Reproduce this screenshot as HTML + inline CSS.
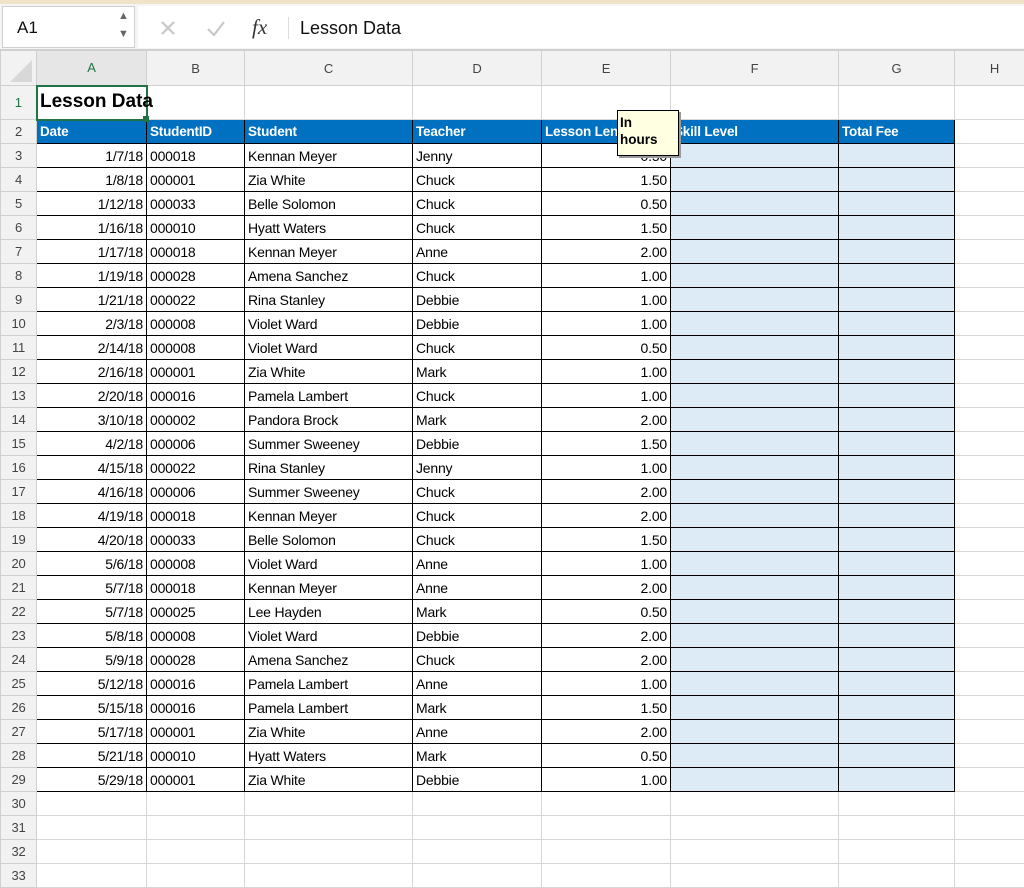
<!DOCTYPE html>
<html><head><meta charset="utf-8"><style>
*{margin:0;padding:0;box-sizing:border-box}
body{width:1024px;height:886px;overflow:hidden;background:#fff;font-family:"Liberation Sans",sans-serif;position:relative}
.top{position:absolute;left:0;top:0;width:1024px;height:4px;background:#efe3c8}
.fb{position:absolute;left:0;top:4px;width:1024px;height:46px;background:#f5f5f5;border-bottom:1px solid #cfcfcf}
.nb{position:absolute;left:2px;top:2px;width:133px;height:42px;background:#fff;border:1px solid #d0d0d0}
.fx{position:absolute;left:138px;top:2px;width:886px;height:42px;background:#fff}
table{position:absolute;left:0;top:50px;width:1034px;border-collapse:collapse;table-layout:fixed;font-size:14px;letter-spacing:-0.2px}
td{border:1px solid #d6d6d6;height:24px;padding:0 3px;white-space:nowrap;overflow:hidden;color:#000}
tr.ch td{height:35px;background:#f2f2f2;text-align:center;color:#444;font-size:13px;border-color:#d0d0d0}
td.rh{background:#f2f2f2;color:#444;text-align:center;font-size:13px;padding:0;border-color:#d0d0d0}
.d{border:1px solid #000}
.h{background:#0070c0;color:#fff;font-weight:bold;border:1px solid #000;font-size:13.5px}
.f{background:#ddebf7;border:1px solid #000}
.r{text-align:right}
</style></head><body>
<div class="top"></div>
<div class="fb">
<div class="nb"><span style="position:absolute;left:14px;top:11px;font-size:17px;color:#111">A1</span>
<span style="position:absolute;left:115px;top:3px;font-size:11px;color:#666">▲</span>
<span style="position:absolute;left:115px;top:21px;font-size:11px;color:#666">▼</span></div>
<div class="fx">
<svg style="position:absolute;left:20px;top:12px" width="120" height="22"><path d="M4 4 L16 16 M16 4 L4 16" stroke="#c8c8c8" stroke-width="2.2"/><path d="M50 11 L56 17 L66 4" stroke="#c8c8c8" stroke-width="2.2" fill="none"/></svg>
<span style="position:absolute;left:114px;top:9px;font-family:'Liberation Serif',serif;font-style:italic;font-size:21px;color:#333">fx</span>
<div style="position:absolute;left:150px;top:11px;width:1px;height:22px;background:#ddd"></div>
<span style="position:absolute;left:162px;top:12px;font-size:18px;color:#111">Lesson Data</span>
</div></div>
<table>
<colgroup><col style="width:36px"><col style="width:110px"><col style="width:98px"><col style="width:168px"><col style="width:129px"><col style="width:129px"><col style="width:168px"><col style="width:116px"><col style="width:80px"></colgroup>
<tr class="ch"><td style="background:#f2f2f2"><svg width="30" height="30" style="display:block;margin-top:2px"><path d="M28 6 L28 28 L6 28 Z" fill="#d8d8d8"/></svg></td><td style="color:#217346;background:#e6e6e6">A</td><td>B</td><td>C</td><td>D</td><td>E</td><td>F</td><td>G</td><td>H</td></tr>
<tr><td class="rh" style="height:34px;color:#217346">1</td><td style="border:2px solid #217346"></td><td></td><td></td><td></td><td></td><td></td><td></td><td></td></tr>
<tr><td class="rh">2</td><td class="h">Date</td><td class="h">StudentID</td><td class="h">Student</td><td class="h">Teacher</td><td class="h">Lesson Length</td><td class="h">Skill Level</td><td class="h">Total Fee</td><td></td></tr>
<tr><td class="rh">3</td><td class="d r">1/7/18</td><td class="d">000018</td><td class="d">Kennan Meyer</td><td class="d">Jenny</td><td class="d r">0.50</td><td class="f"></td><td class="f"></td><td></td></tr>
<tr><td class="rh">4</td><td class="d r">1/8/18</td><td class="d">000001</td><td class="d">Zia White</td><td class="d">Chuck</td><td class="d r">1.50</td><td class="f"></td><td class="f"></td><td></td></tr>
<tr><td class="rh">5</td><td class="d r">1/12/18</td><td class="d">000033</td><td class="d">Belle Solomon</td><td class="d">Chuck</td><td class="d r">0.50</td><td class="f"></td><td class="f"></td><td></td></tr>
<tr><td class="rh">6</td><td class="d r">1/16/18</td><td class="d">000010</td><td class="d">Hyatt Waters</td><td class="d">Chuck</td><td class="d r">1.50</td><td class="f"></td><td class="f"></td><td></td></tr>
<tr><td class="rh">7</td><td class="d r">1/17/18</td><td class="d">000018</td><td class="d">Kennan Meyer</td><td class="d">Anne</td><td class="d r">2.00</td><td class="f"></td><td class="f"></td><td></td></tr>
<tr><td class="rh">8</td><td class="d r">1/19/18</td><td class="d">000028</td><td class="d">Amena Sanchez</td><td class="d">Chuck</td><td class="d r">1.00</td><td class="f"></td><td class="f"></td><td></td></tr>
<tr><td class="rh">9</td><td class="d r">1/21/18</td><td class="d">000022</td><td class="d">Rina Stanley</td><td class="d">Debbie</td><td class="d r">1.00</td><td class="f"></td><td class="f"></td><td></td></tr>
<tr><td class="rh">10</td><td class="d r">2/3/18</td><td class="d">000008</td><td class="d">Violet Ward</td><td class="d">Debbie</td><td class="d r">1.00</td><td class="f"></td><td class="f"></td><td></td></tr>
<tr><td class="rh">11</td><td class="d r">2/14/18</td><td class="d">000008</td><td class="d">Violet Ward</td><td class="d">Chuck</td><td class="d r">0.50</td><td class="f"></td><td class="f"></td><td></td></tr>
<tr><td class="rh">12</td><td class="d r">2/16/18</td><td class="d">000001</td><td class="d">Zia White</td><td class="d">Mark</td><td class="d r">1.00</td><td class="f"></td><td class="f"></td><td></td></tr>
<tr><td class="rh">13</td><td class="d r">2/20/18</td><td class="d">000016</td><td class="d">Pamela Lambert</td><td class="d">Chuck</td><td class="d r">1.00</td><td class="f"></td><td class="f"></td><td></td></tr>
<tr><td class="rh">14</td><td class="d r">3/10/18</td><td class="d">000002</td><td class="d">Pandora Brock</td><td class="d">Mark</td><td class="d r">2.00</td><td class="f"></td><td class="f"></td><td></td></tr>
<tr><td class="rh">15</td><td class="d r">4/2/18</td><td class="d">000006</td><td class="d">Summer Sweeney</td><td class="d">Debbie</td><td class="d r">1.50</td><td class="f"></td><td class="f"></td><td></td></tr>
<tr><td class="rh">16</td><td class="d r">4/15/18</td><td class="d">000022</td><td class="d">Rina Stanley</td><td class="d">Jenny</td><td class="d r">1.00</td><td class="f"></td><td class="f"></td><td></td></tr>
<tr><td class="rh">17</td><td class="d r">4/16/18</td><td class="d">000006</td><td class="d">Summer Sweeney</td><td class="d">Chuck</td><td class="d r">2.00</td><td class="f"></td><td class="f"></td><td></td></tr>
<tr><td class="rh">18</td><td class="d r">4/19/18</td><td class="d">000018</td><td class="d">Kennan Meyer</td><td class="d">Chuck</td><td class="d r">2.00</td><td class="f"></td><td class="f"></td><td></td></tr>
<tr><td class="rh">19</td><td class="d r">4/20/18</td><td class="d">000033</td><td class="d">Belle Solomon</td><td class="d">Chuck</td><td class="d r">1.50</td><td class="f"></td><td class="f"></td><td></td></tr>
<tr><td class="rh">20</td><td class="d r">5/6/18</td><td class="d">000008</td><td class="d">Violet Ward</td><td class="d">Anne</td><td class="d r">1.00</td><td class="f"></td><td class="f"></td><td></td></tr>
<tr><td class="rh">21</td><td class="d r">5/7/18</td><td class="d">000018</td><td class="d">Kennan Meyer</td><td class="d">Anne</td><td class="d r">2.00</td><td class="f"></td><td class="f"></td><td></td></tr>
<tr><td class="rh">22</td><td class="d r">5/7/18</td><td class="d">000025</td><td class="d">Lee Hayden</td><td class="d">Mark</td><td class="d r">0.50</td><td class="f"></td><td class="f"></td><td></td></tr>
<tr><td class="rh">23</td><td class="d r">5/8/18</td><td class="d">000008</td><td class="d">Violet Ward</td><td class="d">Debbie</td><td class="d r">2.00</td><td class="f"></td><td class="f"></td><td></td></tr>
<tr><td class="rh">24</td><td class="d r">5/9/18</td><td class="d">000028</td><td class="d">Amena Sanchez</td><td class="d">Chuck</td><td class="d r">2.00</td><td class="f"></td><td class="f"></td><td></td></tr>
<tr><td class="rh">25</td><td class="d r">5/12/18</td><td class="d">000016</td><td class="d">Pamela Lambert</td><td class="d">Anne</td><td class="d r">1.00</td><td class="f"></td><td class="f"></td><td></td></tr>
<tr><td class="rh">26</td><td class="d r">5/15/18</td><td class="d">000016</td><td class="d">Pamela Lambert</td><td class="d">Mark</td><td class="d r">1.50</td><td class="f"></td><td class="f"></td><td></td></tr>
<tr><td class="rh">27</td><td class="d r">5/17/18</td><td class="d">000001</td><td class="d">Zia White</td><td class="d">Anne</td><td class="d r">2.00</td><td class="f"></td><td class="f"></td><td></td></tr>
<tr><td class="rh">28</td><td class="d r">5/21/18</td><td class="d">000010</td><td class="d">Hyatt Waters</td><td class="d">Mark</td><td class="d r">0.50</td><td class="f"></td><td class="f"></td><td></td></tr>
<tr><td class="rh">29</td><td class="d r">5/29/18</td><td class="d">000001</td><td class="d">Zia White</td><td class="d">Debbie</td><td class="d r">1.00</td><td class="f"></td><td class="f"></td><td></td></tr>
<tr><td class="rh">30</td><td></td><td></td><td></td><td></td><td></td><td></td><td></td><td></td></tr>
<tr><td class="rh">31</td><td></td><td></td><td></td><td></td><td></td><td></td><td></td><td></td></tr>
<tr><td class="rh">32</td><td></td><td></td><td></td><td></td><td></td><td></td><td></td><td></td></tr>
<tr><td class="rh">33</td><td></td><td></td><td></td><td></td><td></td><td></td><td></td><td></td></tr>
</table>
<div style="position:absolute;left:40px;top:91px;font-weight:bold;font-size:19px;white-space:nowrap">Lesson Data</div>
<div style="position:absolute;left:143px;top:116px;width:6px;height:6px;background:#217346"></div>
<div style="position:absolute;left:617px;top:110px;width:62px;height:46px;background:#ffffe1;border:1px solid #000;box-shadow:2px 2px 0 #999;font-weight:bold;font-size:13.5px;line-height:17px;padding:3px 2px">In<br>hours</div>
</body></html>
